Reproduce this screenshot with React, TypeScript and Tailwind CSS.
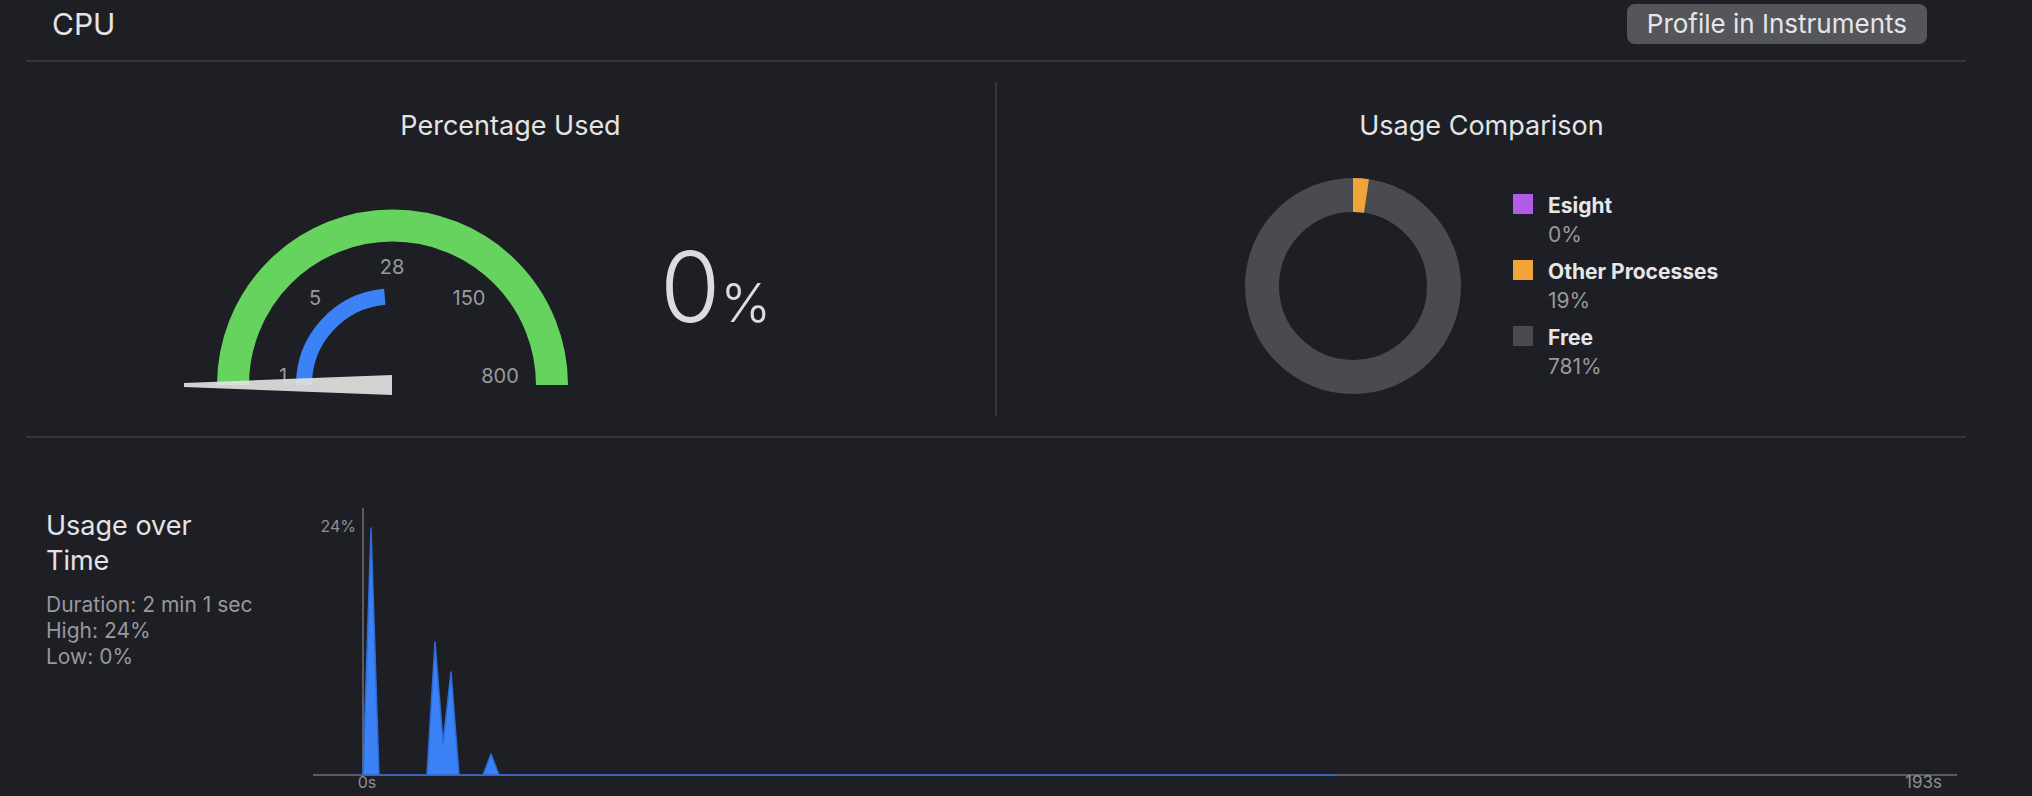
import React from 'react';

const gaugeLabels = [
  { t: '1', x: 103, y: 176 },
  { t: '5', x: 135, y: 98 },
  { t: '28', x: 212, y: 67 },
  { t: '150', x: 289, y: 98 },
  { t: '800', x: 320, y: 176 },
];

const legend = [
  { name: 'Esight', value: '0%', color: 'bg-[#b05ce8]' },
  { name: 'Other Processes', value: '19%', color: 'bg-[#f2a33a]' },
  { name: 'Free', value: '781%', color: 'bg-[#4a4b50]' },
];

const Gauge: React.FC = () => {
  const cx = 212.5;
  const cy = 185;
  const blueEnd = 95 * (Math.PI / 180);
  const bx = cx + 88.5 * Math.cos(blueEnd);
  const by = cy - 88.5 * Math.sin(blueEnd);
  return (
    <svg width={392} height={200} viewBox="0 0 392 200">
      <path d={`M ${cx - 159.5} ${cy} A 159.5 159.5 0 0 1 ${cx + 159.5} ${cy}`} fill="none" stroke="#66d35f" strokeWidth={32} />
      <path d={`M ${cx - 88.5} ${cy} A 88.5 88.5 0 0 1 ${bx} ${by}`} fill="none" stroke="#3b82f7" strokeWidth={16} />
      {gaugeLabels.map(l => (
        <text key={l.t} x={l.x} y={l.y} fill="#9a9a9f" fontSize={20} textAnchor="middle" dominantBaseline="central">
          {l.t}
        </text>
      ))}
      <polygon points="4,183 212,175 212,195 4,187" fill="#e2e2e2" fillOpacity={0.92} />
    </svg>
  );
};

const Donut: React.FC = () => {
  const r = 91;
  const c = 2 * Math.PI * r;
  const other = (c * 19) / 800;
  return (
    <svg width={216} height={216} viewBox="0 0 216 216">
      <circle cx={108} cy={108} r={r} fill="none" stroke="#4a4b50" strokeWidth={34} />
      <circle
        cx={108}
        cy={108}
        r={r}
        fill="none"
        stroke="#f2a33a"
        strokeWidth={34}
        strokeDasharray={`${other} ${c}`}
        transform="rotate(-90 108 108)"
      />
    </svg>
  );
};

const UsageChart: React.FC = () => (
  <svg width={1666} height={296} viewBox="0 0 1666 296">
    <line x1={63} y1={8} x2={63} y2={276} stroke="#5b5c61" strokeWidth={2} />
    <line x1={13} y1={275} x2={1657} y2={275} stroke="#5b5c61" strokeWidth={2} />
    <path
      d="M63,275 L71,28 L79,275 L127,275 L135,142 L143,243 L151,172 L159,275 L183,275 L191,254 L199,275 L1037,275 Z"
      fill="#3b82f7"
      stroke="#2e6bd6"
      strokeWidth={1.5}
      strokeLinejoin="round"
    />
    <text x={56} y={26} fill="#8e8e93" fontSize={16} textAnchor="end" dominantBaseline="central">24%</text>
    <text x={67} y={282} fill="#8e8e93" fontSize={16} textAnchor="middle" dominantBaseline="central">0s</text>
    <text x={1642} y={282} fill="#8e8e93" fontSize={17} textAnchor="end" dominantBaseline="central">193s</text>
  </svg>
);

export default function App() {
  return (
    <div className="w-[2032px] h-[796px] overflow-hidden bg-[#1e1f24] text-[#e4e4e6] font-[Inter,sans-serif]">
      <div className="ml-[26px] w-[1940px]">
        <div className="h-[60px] flex items-start justify-between">
          <h1 className="pl-[26px] pt-[9px] text-[30px] leading-none">CPU</h1>
          <button className="mt-[4px] mr-[39px] h-[40px] px-[20px] rounded-[8px] bg-[#55565b] text-[26px] leading-none text-[#e6e6e8] flex items-center">
            Profile in Instruments
          </button>
        </div>
        <div className="h-[2px] bg-[#36373c]" />

        <div className="h-[374px] flex">
          <div className="w-[969px] flex flex-col">
            <h2 className="pt-[50px] text-center text-[27px] leading-none">Percentage Used</h2>
            <div className="mt-[61px] pl-[154px] flex items-start">
              <Gauge />
              <div className="ml-[88px] mt-[38px] flex items-baseline text-[#dcdcde] font-light leading-none">
                <span className="text-[98px]">0</span>
                <span className="text-[54px]">%</span>
              </div>
            </div>
          </div>
          <div className="w-[2px] my-[20px] bg-[#36373c]" />
          <div className="flex-1 flex flex-col">
            <h2 className="pt-[50px] text-center text-[27px] leading-none">Usage Comparison</h2>
            <div className="mt-[39px] pl-[248px] flex items-start">
              <Donut />
              <div className="ml-[52px] mt-[13px] flex flex-col gap-[8px]">
                {legend.map(item => (
                  <div key={item.name} className="flex items-start gap-[15px]">
                    <div className={`w-[20px] h-[20px] mt-[3px] ${item.color}`} />
                    <div className="text-[21px] leading-[29px]">
                      <div className="font-bold text-[#e6e6e8]">{item.name}</div>
                      <div className="text-[#98989d]">{item.value}</div>
                    </div>
                  </div>
                ))}
              </div>
            </div>
          </div>
        </div>
        <div className="h-[2px] bg-[#36373c]" />

        <div className="flex items-start">
          <div className="w-[274px] pl-[20px] pt-[70px]">
            <h3 className="text-[27px] leading-[35px]">
              Usage over
              <br />
              Time
            </h3>
            <div className="mt-[14px] text-[21px] leading-[26px] text-[#98989d]">
              <div>Duration: 2 min 1 sec</div>
              <div>High: 24%</div>
              <div>Low: 0%</div>
            </div>
          </div>
          <div className="mt-[62px]">
            <UsageChart />
          </div>
        </div>
      </div>
    </div>
  );
}
